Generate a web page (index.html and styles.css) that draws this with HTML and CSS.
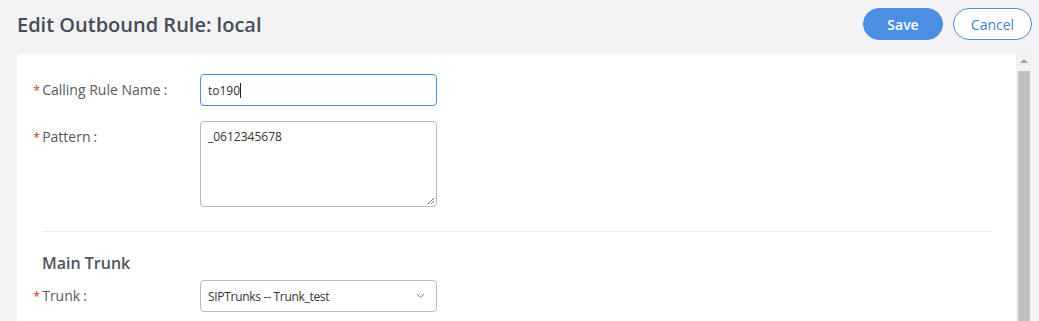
FILE: index.html
```html
<!DOCTYPE html>
<html>
<head>
<meta charset="utf-8">
<link rel="stylesheet" href="styles.css">
</head>
<body>
<div class="header">
  <h1 class="title">Edit Outbound Rule: local</h1>
  <div class="actions">
    <button class="btn btn-primary">Save</button>
    <button class="btn btn-default">Cancel</button>
  </div>
</div>
<div class="panel">
  <div class="card">
    <div class="row">
      <label class="label"><span class="req">*</span>Calling Rule Name<span class="colon">:</span></label>
      <div class="input focused"><span>to190</span><span class="caret"></span></div>
    </div>
    <div class="row">
      <label class="label"><span class="req">*</span>Pattern<span class="colon">:</span></label>
      <div class="textarea"><span>_0612345678</span>
        <svg class="grip" width="9" height="9" viewBox="0 0 9 9"><path d="M8 2 L2 8 M8 5 L5 8" stroke="#777" stroke-width="1"/></svg>
      </div>
    </div>
    <div class="divider"></div>
    <h2 class="section">Main Trunk</h2>
    <div class="row">
      <label class="label"><span class="req">*</span>Trunk<span class="colon">:</span></label>
      <div class="select"><span class="sel-text">SIPTrunks -- Trunk_test</span>
        <svg class="chev" width="9" height="6" viewBox="0 0 9 6"><path d="M1 1 L4.5 4.5 L8 1" fill="none" stroke="#888" stroke-width="1"/></svg>
      </div>
    </div>
  </div>
  <div class="scrollbar">
    <div class="arrow"></div>
    <div class="thumb"></div>
  </div>
</div>
</body>
</html>
```
FILE: styles.css
```css
html, body {
  margin: 0;
  padding: 0;
  height: 321px;
  overflow: hidden;
  background: #f3f3f6;
  font-family: "Open Sans", "Noto Sans", sans-serif;
}
.header {
  display: flex;
  align-items: center;
  justify-content: space-between;
  height: 48px;
  padding: 0 7px 0 17px;
}
.title {
  margin: 0;
  font-size: 20px;
  font-weight: 600;
  color: #474c57;
}
.actions {
  display: flex;
  gap: 10px;
}
.btn {
  height: 32px;
  width: 80px;
  border-radius: 16px;
  font-family: "Open Sans", "Noto Sans", sans-serif;
  font-size: 14px;
  padding: 0;
}
.btn-primary {
  background: #4a8fe2;
  border: 1px solid #4a8fe2;
  color: #fff;
  font-weight: 600;
}
.btn-default {
  background: #fff;
  border: 1px solid #4a8fe2;
  color: #3f7fcc;
  width: 79px;
}
.panel {
  display: flex;
  margin: 6px 8px 0 17px;
  height: 300px;
}
.card {
  flex: 1;
  background: #fff;
  border-radius: 4px 0 0 0;
  padding: 20px 0 0 16px;
}
.scrollbar {
  width: 15px;
  background: #f1f1f1;
}
.arrow {
  width: 0;
  height: 0;
  margin: 5px auto 0;
  border-left: 4px solid transparent;
  border-right: 4px solid transparent;
  border-bottom: 4px solid #a3a3a3;
}
.thumb {
  margin: 8px 1px 0 2px;
  height: 300px;
  background: #c1c1c1;
}
.row {
  display: flex;
  align-items: flex-start;
  margin-bottom: 15px;
}
.label {
  width: 167px;
  font-size: 14px;
  color: #555a63;
  line-height: 31px;
  white-space: nowrap;
}
.req {
  color: #d9342b;
  margin-right: 2px;
  font-size: 13px;
}
.colon {
  margin-left: 3px;
}
.input, .select, .textarea {
  box-sizing: border-box;
  width: 237px;
  border: 1px solid #b7b9bd;
  border-radius: 4px;
  font-size: 12px;
  color: #333;
  padding: 0 7px;
  background: #fff;
}
.input {
  height: 32px;
  display: flex;
  align-items: center;
}
.input.focused {
  border-color: #4a8fe2;
}
.caret {
  display: inline-block;
  width: 1px;
  height: 15px;
  background: #222;
}
.textarea {
  height: 86px;
  padding-top: 6px;
  position: relative;
}
.grip {
  position: absolute;
  right: 1px;
  bottom: 1px;
}
.divider {
  height: 1px;
  background: #ebebeb;
  margin: 24px 25px 0 9px;
}
.section {
  margin: 20px 0 6px 9px;
  font-size: 16px;
  font-weight: 600;
  color: #50555e;
}
.select {
  height: 32px;
  display: flex;
  align-items: center;
  justify-content: space-between;
  padding-right: 11px;
}
.sel-text {
  letter-spacing: -0.3px;
}
```
